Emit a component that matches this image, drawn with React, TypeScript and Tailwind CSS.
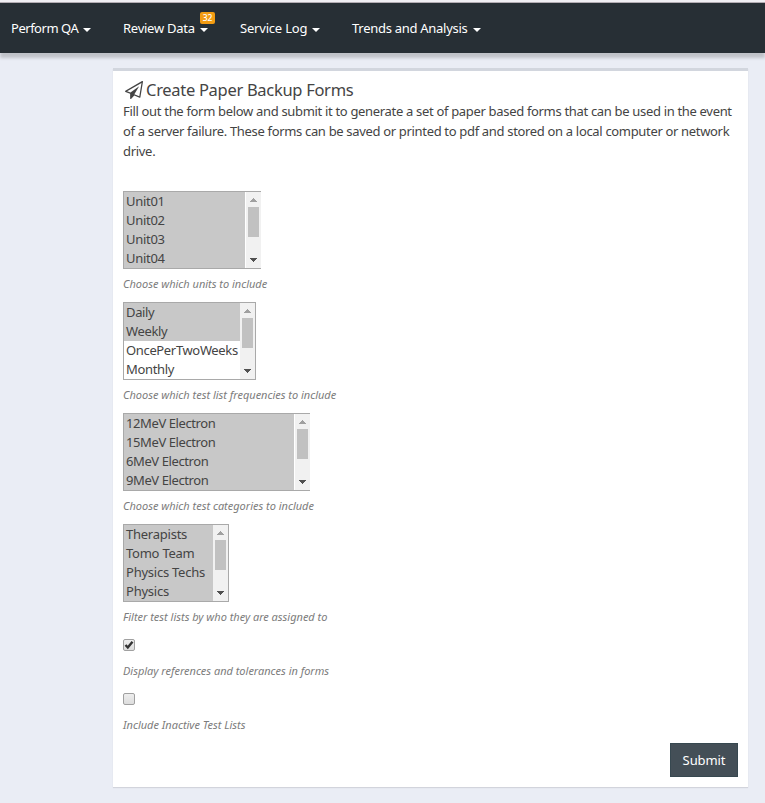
import type { ReactNode } from "react";

const navItems = [
  { label: "Perform QA", width: "w-[112px]", text: "w-[67px]", spacing: "tracking-[-0.48px]" },
  { label: "Review Data", width: "w-[117px]", text: "w-[72px]", spacing: "tracking-[-0.25px]", badge: "32" },
  { label: "Service Log", width: "w-[112px]", text: "w-[67px]", spacing: "tracking-[-0.2px]" },
  { label: "Trends and Analysis", width: "w-[140px]", text: "w-[116px]", spacing: "tracking-[-0.28px]" },
];

const lists = [
  {
    width: "w-[138px]",
    clipped: true,
    options: ["Unit01", "Unit02", "Unit03", "Unit04"],
    selected: 4,
    help: "Choose which units to include",
    optSpacing: "tracking-[-0.28px]",
  },
  {
    width: "w-[133px]",
    clipped: false,
    options: ["Daily", "Weekly", "OncePerTwoWeeks", "Monthly"],
    selected: 2,
    help: "Choose which test list frequencies to include",
    optSpacing: "tracking-[-0.35px]",
  },
  {
    width: "w-[187px]",
    clipped: true,
    options: ["12MeV Electron", "15MeV Electron", "6MeV Electron", "9MeV Electron"],
    selected: 4,
    help: "Choose which test categories to include",
    optSpacing: "tracking-[-0.4px]",
  },
  {
    width: "w-[106px]",
    clipped: false,
    options: ["Therapists", "Tomo Team", "Physics Techs", "Physics"],
    selected: 4,
    help: "Filter test lists by who they are assigned to",
    optSpacing: "tracking-[-0.24px]",
  },
];

function PaperPlane() {
  return (
    <svg viewBox="0 0 1792 1792" className="mr-px h-[18px] w-[18px]" fill="currentColor">
      <path d="M1764 11q33 24 27 64l-256 1536q-5 29-32 45-14 8-31 8-11 0-24-5l-527-215-298 327q-18 21-47 21-14 0-23-4-19-7-30-23.5t-11-36.5v-452l-472-193q-37-14-40-55-3-39 32-59l1664-960q35-21 68 2zm-342 1499l221-1323-1434 827 336 137 863-639-478 797z" />
    </svg>
  );
}

function Help({ children }: { children: ReactNode }) {
  return (
    <div className="h-[20px] text-[11px] leading-[20px] tracking-[-0.01px] whitespace-nowrap text-[#7c7c7c] italic">
      {children}
    </div>
  );
}

function ScrollBar() {
  return (
    <div className="flex w-[15px] shrink-0 flex-col items-center bg-[#f1f1f1]">
      <svg className="h-[15px] w-[15px]" viewBox="0 0 15 15" shapeRendering="crispEdges">
        <path d="M7 6h1v1h1v1h1v1h1v1H4V9h1V8h1V7h1z" fill="#a0a0a0" />
      </svg>
      <div className="h-[30px] w-[11px] bg-[#c1c1c1]" />
      <div className="grow" />
      <svg className="h-[15px] w-[15px]" viewBox="0 0 15 15" shapeRendering="crispEdges">
        <path d="M4 5h7v1h-1v1h-1v1h-1v1H7V8H6V7H5V6H4z" fill="#505050" />
      </svg>
    </div>
  );
}

export default function App() {
  return (
    <div className="flex h-[803px] w-[765px] flex-col overflow-hidden bg-[#eaedf5] font-['Noto_Sans',sans-serif] text-[13px] text-[#444444]">
      <div className="h-[3px] shrink-0 border-b border-[#b3adb3] bg-[#f0eff3]" />
      <nav className="flex h-[50px] shrink-0 bg-[#272f35] pl-[11px] text-white shadow-[0_5px_3px_rgba(0,0,0,0.18)]">
        {navItems.map((item) => (
          <div key={item.label} className={`relative flex h-[50px] items-center ${item.width}`}>
            <span className={`mt-[2px] shrink-0 whitespace-nowrap ${item.text} ${item.spacing}`}>{item.label}</span>
            <span className="mt-[4px] ml-[5px] border-x-4 border-t-4 border-x-transparent border-t-white" />
            {item.badge && (
              <span className="absolute top-[9px] left-[77px] h-[12px] w-[15px] rounded-[2px] bg-[#f39c12] text-center text-[8.5px] leading-[12px] font-medium">
                {item.badge}
              </span>
            )}
          </div>
        ))}
      </nav>
      <main className="mt-[15px] ml-[113px] flex h-[719px] w-[635px] shrink-0 flex-col border-t-[3px] border-[#d2d6de] bg-white px-[10px] shadow-[0_1px_1px_rgba(0,0,0,0.1)]">
        <h1 className="mt-[9px] flex h-[20px] items-center text-[16.5px] leading-[20px]">
          <span className="flex w-[23px] justify-center">
            <PaperPlane />
          </span>
          <span className="tracking-[-0.3px] whitespace-nowrap">Create Paper Backup Forms</span>
        </h1>
        <p className="mt-[1px] leading-[20px] whitespace-nowrap">
          <span className="block tracking-[-0.322px]">
            Fill out the form below and submit it to generate a set of paper based forms that can be used in the event
          </span>
          <span className="block tracking-[-0.328px]">
            of a server failure. These forms can be saved or printed to pdf and stored on a local computer or network
          </span>
          <span className="block tracking-[-0.3px]">drive.</span>
        </p>
        <div className="mt-[30px]">
          {lists.map((list) => (
            <section key={list.help} className="h-[111px]">
              <div
                className={`flex h-[78px] border border-[#a9a9a9] bg-white ${list.width} ${list.clipped ? "border-r-0" : ""}`}
              >
                <div className={`min-w-0 grow ${list.clipped ? "border-r border-white" : ""}`}>
                  {list.options.map((option, i) => (
                    <div
                      key={option}
                      className={`h-[19px] pl-[2px] leading-[19px] whitespace-nowrap ${list.optSpacing} ${i < list.selected ? "bg-[#c8c8c8]" : ""}`}
                    >
                      {option}
                    </div>
                  ))}
                </div>
                <ScrollBar />
              </div>
              <div className="h-[5px]" />
              <Help>{list.help}</Help>
            </section>
          ))}
        </div>
        <div className="mt-[4px] flex h-[12px] w-[12px] items-center justify-center rounded-[2px] border border-[#a0a0a0] bg-linear-to-b from-[#eeeeee] to-[#dddddd]">
          <svg viewBox="0 0 10 10" className="h-[10px] w-[10px] shrink-0">
            <path d="M1.500 5L3.800 7.500L8.500 1.800" fill="none" stroke="#333333" strokeWidth="2.400" />
          </svg>
        </div>
        <div className="h-[10px]" />
        <Help>Display references and tolerances in forms</Help>
        <div className="mt-[12px] h-[12px] w-[12px] rounded-[2px] border border-[#a0a0a0] bg-linear-to-b from-[#eeeeee] to-[#dddddd]" />
        <div className="h-[10px]" />
        <Help>Include Inactive Test Lists</Help>
        <button className="mt-[8px] h-[34px] w-[68px] self-end border border-[#374850] bg-[#444f57] pt-[2px] text-white tracking-[-0.1px]">
          Submit
        </button>
      </main>
    </div>
  );
}
